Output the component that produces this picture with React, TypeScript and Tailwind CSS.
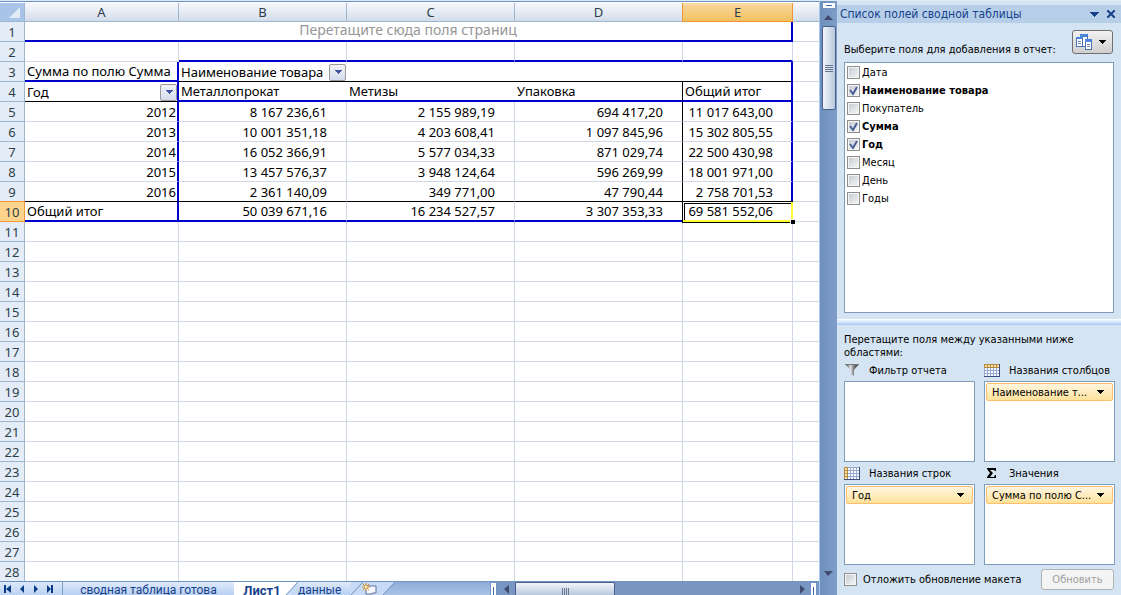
import type { ReactNode } from "react";

const columns = ["A", "B", "C", "D", "E"];
const years = [
  { row: 5, year: 2012, values: ["8 167 236,61", "2 155 989,19", "694 417,20"], total: "11 017 643,00" },
  { row: 6, year: 2013, values: ["10 001 351,18", "4 203 608,41", "1 097 845,96"], total: "15 302 805,55" },
  { row: 7, year: 2014, values: ["16 052 366,91", "5 577 034,33", "871 029,74"], total: "22 500 430,98" },
  { row: 8, year: 2015, values: ["13 457 576,37", "3 948 124,64", "596 269,99"], total: "18 001 971,00" },
  { row: 9, year: 2016, values: ["2 361 140,09", "349 771,00", "47 790,44"], total: "2 758 701,53" },
];
const emptyRows = [...Array(18).keys()].map((n) => n + 11);

const fields = [
  { name: "Дата", used: false },
  { name: "Наименование товара", used: true },
  { name: "Покупатель", used: false },
  { name: "Сумма", used: true },
  { name: "Год", used: true },
  { name: "Месяц", used: false },
  { name: "День", used: false },
  { name: "Годы", used: false },
];

const Arrow = ({ className = "h-1 w-2" }: { className?: string }) => (
  <svg viewBox="0 0 8 4" className={`shrink-0 ${className}`} shapeRendering="crispEdges">
    <path d="M0 0h8L4 4z" fill="currentColor" />
  </svg>
);

const RowHead = ({ n, active = false }: { n: number; active?: boolean }) => (
  <th
    scope="row"
    className={`border-r border-b p-0 pt-px text-center font-normal text-[#2b3f4a] ${
      active
        ? "border-[#f29436] bg-[#ffd58d] shadow-[0_-1px_0_#f29436]"
        : "border-[#9eb6ce] bg-[#e4ecf7]"
    }`}>
    {n}
  </th>
);

const FilterButton = ({ label }: { label: string }) => (
  <button
    aria-label={label}
    className="flex h-[17px] w-[17px] shrink-0 items-center justify-center rounded-xs border border-[#9a9a9a] bg-linear-to-b from-[#f4f4f4] to-[#d3dcee] text-[#3f55a5]">
    <Arrow />
  </button>
);

const Sheet = () => (
  <table className="w-full table-fixed border-separate border-spacing-0 text-[13px] leading-[17px]">
    <colgroup>
      <col className="w-[25px]" />
      <col className="w-[154px]" />
      <col className="w-[168px]" />
      <col className="w-[168px]" />
      <col className="w-[168px]" />
      <col className="w-[110px]" />
      <col />
    </colgroup>
    <thead>
      <tr className="h-[19px]">
        <th className="border-r border-b border-[#9eb6ce] bg-[#a9c4e9] p-0">
          <svg viewBox="0 0 24 18" className="block h-[18px] w-6">
            <path d="M20 4v11H9z" fill="#e2ebf7" />
          </svg>
        </th>
        {columns.map((c) => (
          <th
            key={c}
            scope="col"
            className={`border-r border-b p-0 text-center font-normal text-[#2b3f4a] ${
              c === "E"
                ? "border-[#f29436] bg-linear-to-b from-[#f9d99f] to-[#f1c15f] shadow-[-1px_0_0_#f29436]"
                : "border-[#9eb6ce] bg-linear-to-b from-[#f6f9fc] to-[#d3dcea]"
            }`}>
            {c}
          </th>
        ))}
        <th className="border-b border-[#9eb6ce] bg-linear-to-b from-[#f6f9fc] to-[#d3dcea] p-0" />
      </tr>
    </thead>
    <tbody>
      <tr className="h-5">
        <RowHead n={1} />
        <td
          colSpan={5}
          className="border-r-2 border-b-2 border-[#0000cc] p-0 pb-0.5 text-center text-sm leading-4 text-[#969696]">
          Перетащите сюда поля страниц
        </td>
        <td className="border-b border-[#d0d7e5]" />
      </tr>
      <tr className="h-5">
        <RowHead n={2} />
        <td className="border-r border-b border-[#d0d7e5]" />
        {["B", "C", "D", "E"].map((c) => (
          <td key={c} className="border-r border-b-2 border-r-[#d0d7e5] border-b-[#0000cc]" />
        ))}
        <td className="border-b border-[#d0d7e5]" />
      </tr>
      <tr className="h-5">
        <RowHead n={3} />
        <td className="border-r-2 border-b-2 border-[#0000cc] p-0 pt-px pl-0.5 whitespace-nowrap">
          Сумма по полю Сумма
        </td>
        <td colSpan={4} className="border-r-2 border-b border-r-[#0000cc] border-b-black p-0 pt-px pl-0.5">
          <div className="flex items-center gap-1.5">
            <span>Наименование товара</span>
            <FilterButton label="Фильтр: Наименование товара" />
          </div>
        </td>
        <td className="border-b border-[#d0d7e5]" />
      </tr>
      <tr className="h-5">
        <RowHead n={4} />
        <td className="border-r-2 border-b border-r-[#0000cc] border-b-black p-0 pt-px pl-0.5">
          <div className="flex items-center justify-between">
            <span>Год</span>
            <FilterButton label="Фильтр: Год" />
          </div>
        </td>
        <td className="border-b-2 border-[#0000cc] p-0 pt-px pl-0.5">Металлопрокат</td>
        <td className="border-b-2 border-[#0000cc] p-0 pt-px pl-0.5">Метизы</td>
        <td className="border-r border-b-2 border-r-black border-b-[#0000cc] p-0 pt-px pl-0.5">Упаковка</td>
        <td className="border-r-2 border-b-2 border-[#0000cc] p-0 pt-px pl-0.5">Общий итог</td>
        <td className="border-b border-[#d0d7e5]" />
      </tr>
      {years.map(({ row, year, values, total }) => {
        const line = row === 9 ? "border-b-black" : "border-b-[#d0d7e5]";
        return (
          <tr key={row} className="h-5">
            <RowHead n={row} />
            <td className={`border-r-2 border-b border-r-[#0000cc] p-0 pt-px pr-px text-right ${line}`}>
              {year}
            </td>
            {values.map((v, i) => (
              <td
                key={v}
                className={`border-r border-b p-0 pt-px pr-[19px] text-right ${line} ${
                  i === 2 ? "border-r-black" : "border-r-[#d0d7e5]"
                }`}>
                {v}
              </td>
            ))}
            <td className={`border-r-2 border-b border-r-[#0000cc] p-0 pt-px pr-[18px] text-right ${line}`}>
              {total}
            </td>
            <td className="border-b border-[#d0d7e5]" />
          </tr>
        );
      })}
      <tr className="h-5">
        <RowHead n={10} active />
        <td className="border-r-2 border-b-2 border-[#0000cc] p-0 pt-px pl-0.5">Общий итог</td>
        {["50 039 671,16", "16 234 527,57", "3 307 353,33"].map((v) => (
          <td
            key={v}
            className="border-r border-b-2 border-r-[#d0d7e5] border-b-[#0000cc] p-0 pt-px pr-[19px] text-right">
            {v}
          </td>
        ))}
        <td className="relative border-r-2 border-b-2 border-[#ffff33] p-0 pt-px pr-[18px] text-right">
          69 581 552,06
          {/* selection frame and fill handle */}
          <span className="absolute -top-px -right-0.5 -bottom-0.5 -left-px border-t border-l border-black" />
          <span className="absolute top-px right-0 bottom-0 left-px border-t border-l border-black" />
          <span className="absolute -right-0.5 -bottom-[3px] -left-px h-px bg-black" />
          <span className="absolute -right-1 -bottom-1 h-[5px] w-[5px] border-t border-l border-white bg-black" />
        </td>
        <td className="border-b border-[#d0d7e5]" />
      </tr>
      {emptyRows.map((n) => (
        <tr key={n} className="h-5">
          <RowHead n={n} />
          {columns.map((c) => (
            <td key={c} className="border-r border-b border-[#d0d7e5]" />
          ))}
          <td className="border-b border-[#d0d7e5]" />
        </tr>
      ))}
    </tbody>
  </table>
);

const navIcons = [
  { label: "Первый лист", d: "M0 0h2v8H0zM7 0v8L2 4z" },
  { label: "Предыдущий лист", d: "M6 0v8L2 4z" },
  { label: "Следующий лист", d: "M2 0v8l4-4z" },
  { label: "Последний лист", d: "M1 0v8l4-4zM5 0h2v8H5z" },
];

const SheetTabs = () => (
  <div className="flex h-3.5 shrink-0 items-start overflow-hidden border-t border-[#6f93c3] bg-linear-to-b from-[#8fadd8] to-[#a9c3e8]">
    <div className="flex h-full min-w-0 flex-1 items-start overflow-hidden font-['Roboto',sans-serif] text-xs leading-[17px] text-[#15428b]">
      <div className="flex h-full w-[62px] shrink-0 items-center gap-1.5 bg-linear-to-b from-[#dbe8fa] to-[#bdd3f2] pl-1">
        {navIcons.map(({ label, d }) => (
          <button key={label} aria-label={label}>
            <svg viewBox="0 0 8 8" className="h-2 w-2">
              <path d={d} fill="#0c3a86" />
            </svg>
          </button>
        ))}
      </div>
      <button className="h-full w-[172px] shrink-0 border-l border-[#7f9fcb] bg-linear-to-b from-[#dfeafa] to-[#b9d0f2]">
        сводная таблица готова
      </button>
      <button className="h-full w-[52px] shrink-0 bg-white pl-1 text-[13px] font-bold">Лист1</button>
      <svg viewBox="0 0 12 13" className="h-[13px] w-3 shrink-0 bg-[#c8dbf6]">
        <path d="M0 0h12L0 13z" fill="#fff" />
        <path d="M12 0L0 13" stroke="#6f8fbd" />
      </svg>
      <button className="h-full w-[53px] shrink-0 bg-linear-to-b from-[#dfeafa] to-[#b9d0f2] pr-2.5 text-center">
        данные
      </button>
      <button aria-label="Вставить лист" className="shrink-0">
        <svg viewBox="0 0 44 13" className="h-[13px] w-11">
          <path d="M0 0h44L32 13H0z" fill="#c8dbf6" />
          <path d="M12 0L0 13M44 0L32 13" stroke="#6f8fbd" />
          <path d="M17 4h8v7h-3l-2 1h-5V8" fill="#f4f7fc" stroke="#5e6f9c" />
          <path d="M15 1v8M11 5h8M12 2l6 6M18 2l-6 6" stroke="#d98a1c" />
          <path d="M14 4h2v2h-2z" fill="#fff3b0" />
        </svg>
      </button>
    </div>
    <div className="flex h-full w-[329px] shrink-0 items-start bg-[#7896c1] pr-0.5">
      <span className="flex h-full w-[7px] shrink-0 border border-b-0 border-[#6f93c3] bg-white pt-1 pl-0.5">
        <span className="h-full w-px bg-[#3d6aa8]" />
      </span>
      <button aria-label="Прокрутить влево" className="flex h-full w-[18px] shrink-0 items-center justify-center pt-0.5">
        <svg viewBox="0 0 5 9" className="h-[9px] w-[5px]">
          <path d="M5 0v9L0 4z" fill="#3f4a6e" />
        </svg>
      </button>
      <div className="flex h-full w-[100px] items-center justify-center gap-px rounded-t-xs border border-b-0 border-[#4a6088] bg-linear-to-b from-[#f2f5fa] to-[#b9c8dd] pt-1">
        {[1, 2, 3, 4].map((n) => (
          <span key={n} className="h-[7px] w-px bg-[#6a7690]" />
        ))}
      </div>
      <div className="flex-1" />
      <button aria-label="Прокрутить вправо" className="flex h-full w-4 shrink-0 items-center justify-center pt-0.5">
        <svg viewBox="0 0 5 9" className="h-[9px] w-[5px]">
          <path d="M0 0v9l5-5z" fill="#3f4a6e" />
        </svg>
      </button>
      <span className="flex h-full w-[7px] shrink-0 border border-b-0 border-[#6f93c3] bg-white pt-1 pl-0.5">
        <span className="h-full w-px bg-[#3d6aa8]" />
      </span>
    </div>
  </div>
);

const VerticalScroll = () => (
  <div className="flex w-[18px] shrink-0 flex-col items-center border-l border-[#a9c8ee] bg-linear-to-r from-[#6e90be] to-[#7f9dc8] pt-px">
    <span className="flex h-[7px] w-3.5 shrink-0 items-center justify-center border border-[#6f93c3] bg-white">
      <span className="h-px w-1.5 bg-[#3d6aa8]" />
    </span>
    <button aria-label="Прокрутить вверх" className="flex h-[17px] w-full shrink-0 items-center justify-center">
      <svg viewBox="0 0 9 5" className="h-[5px] w-[9px]">
        <path d="M0 5h9L4 0z" fill="#3f4a6e" />
      </svg>
    </button>
    <div className="flex h-[84px] w-3.5 shrink-0 flex-col items-center justify-center gap-px rounded-xs border border-[#4a6088] bg-linear-to-r from-[#f2f5fa] to-[#b9c8dd]">
      {[1, 2, 3, 4].map((n) => (
        <span key={n} className="h-px w-2 bg-[#6a7690]" />
      ))}
    </div>
    <div className="flex-1" />
    <button aria-label="Прокрутить вниз" className="mb-3.5 flex h-4 w-full shrink-0 items-center justify-center">
      <svg viewBox="0 0 9 5" className="h-[5px] w-[9px]">
        <path d="M0 0h9L4 5z" fill="#3f4a6e" />
      </svg>
    </button>
  </div>
);

const CheckBox = ({ label, checked = false, className = "" }: { label: string; checked?: boolean; className?: string }) => (
  <label className={`flex items-center ${className}`}>
    <span className="relative h-[13px] w-[13px] shrink-0">
      <input
        type="checkbox"
        defaultChecked={checked}
        className="peer block h-[13px] w-[13px] appearance-none border border-[#8e8f8f] bg-linear-to-br from-[#c3c9d0] to-[#f8f8f8] shadow-[inset_0_0_0_1px_#f4f4f4]"
      />
      <svg viewBox="0 0 13 13" className="pointer-events-none absolute inset-0 hidden h-[13px] w-[13px] peer-checked:block">
        <path d="M3 6l3 4 4-7" fill="none" stroke="#4a5f97" strokeWidth="2" />
      </svg>
    </span>
    <span>{label}</span>
  </label>
);

const FunnelIcon = () => (
  <svg viewBox="0 0 16 14" className="h-3.5 w-4">
    <defs>
      <linearGradient id="funnel">
        <stop offset="0" stopColor="#222" />
        <stop offset=".4" stopColor="#e4e4e4" />
        <stop offset=".6" stopColor="#888" />
        <stop offset="1" stopColor="#222" />
      </linearGradient>
    </defs>
    <path d="M1 1h14l-5 6v6l-3-2V7z" fill="url(#funnel)" />
    <path d="M1 1.500h14" stroke="#777" />
  </svg>
);

const GridIcon = ({ side }: { side: "top" | "left" }) => (
  <svg viewBox="0 0 16 13" className="h-[13px] w-4" shapeRendering="crispEdges">
    <path d="M0 0h16v13H0z" fill="#9aaace" />
    {side === "top" ? <path d="M0 0h16v4H0z" fill="#b08a45" /> : <path d="M0 0h4v13H0z" fill="#b08a45" />}
    {[1, 4, 7, 10].map((y) =>
      [1, 4, 7, 10, 13].map((x) => (
        <path
          key={`${x}-${y}`}
          d={`M${x} ${y}h2v2h-2z`}
          fill={(side === "top" ? y === 1 : x === 1) ? "#ffe6a0" : "#f5f8ff"}
        />
      ))
    )}
    <path d="M15 0h1v13H0v-1h15z" fill="#3c4d80" />
  </svg>
);

const SigmaIcon = () => (
  <svg viewBox="0 0 16 12" className="h-3 w-4">
    <path d="M3 1h9v3h-1l-1-1H6l3 3-3 4h4l1-2h1v3H3v-1l3-4-3-4z" fill="#000" />
  </svg>
);

const Zone = ({ icon, title, field }: { icon: ReactNode; title: string; field?: string }) => (
  <section className="flex min-w-0 flex-col">
    <h3 className="flex h-[22px] items-center gap-[9px] whitespace-nowrap">
      <span className="flex w-4 shrink-0 justify-center">{icon}</span>
      {title}
    </h3>
    <div className="h-[81px] border border-[#7f9db9] bg-white p-px">
      {field && (
        <button className="flex h-[18px] w-full items-center justify-between rounded-xs border border-[#fdbf6f] bg-linear-to-b from-[#fff6e0] to-[#ffe29a] pr-2 pl-[5px]">
          {field}
          <Arrow />
        </button>
      )}
    </div>
  </section>
);

const FieldList = () => (
  <aside className="flex w-[284px] shrink-0 flex-col bg-[#d5e4f3] font-['DejaVu_Sans_Condensed','DejaVu_Sans',sans-serif] text-[11px] leading-[13px] text-black">
    <header className="mt-1 flex h-[18px] shrink-0 items-center bg-[#b7cee9] pr-1.5 pl-[3px] text-xs text-[#15428b]">
      <h2 className="flex-1">Список полей сводной таблицы</h2>
      <button aria-label="Параметры области задач">
        <Arrow className="h-[5px] w-2.5" />
      </button>
      <button aria-label="Закрыть" className="ml-2">
        <svg viewBox="0 0 8 8" className="h-2 w-2">
          <path d="M0 0l8 8M8 0L0 8" stroke="#15428b" strokeWidth="2" />
        </svg>
      </button>
    </header>
    <div className="flex h-[39px] shrink-0 items-end justify-between pr-2 pb-1.5 pl-[7px]">
      <p>Выберите поля для добавления в отчет:</p>
      <button
        aria-label="Вид списка полей"
        className="mb-0.5 flex h-6 w-[41px] items-center justify-between rounded-[3px] border border-[#707070] bg-linear-to-b from-[#f2f2f2] to-[#cfcfcf] pr-1.5 pl-[3px]">
        <svg viewBox="0 0 16 16" className="h-4 w-4" shapeRendering="crispEdges">
          <path d="M4 0h7v12H4z" fill="#fff" stroke="#4b73b8" />
          <path d="M4 0h7v3H4z" fill="#4b86dd" />
          <path d="M0 3h6v9H0z" fill="#fff" stroke="#4b73b8" />
          <path d="M0 3h7v2H0z" fill="#4b86dd" />
          <path d="M9 5h6v10H9z" fill="#fff" stroke="#4b73b8" />
          <path d="M9 5h6v3H9z" fill="#4b86dd" />
          <path d="M2 7h3M2 9h3M11 10h3M11 12h3" stroke="#6f86b4" />
        </svg>
        <Arrow />
      </button>
    </div>
    <ul className="mx-[7px] h-[251px] shrink-0 border border-[#7f9db9] bg-white pl-0.5">
      {fields.map(({ name, used }) => (
        <li key={name} className={used ? "font-bold" : ""}>
          <CheckBox label={name} checked={used} className="h-[18px] gap-0.5" />
        </li>
      ))}
    </ul>
    <div className="mt-1.5 h-1.5 shrink-0 bg-linear-to-b from-white to-[#a9cbf7]" />
    <p className="mt-2 pr-10 pl-[7px]">Перетащите поля между указанными ниже областями:</p>
    <div className="grid grid-cols-2 gap-x-[9px] pr-1.5 pl-[7px]">
      <Zone icon={<FunnelIcon />} title="Фильтр отчета" />
      <Zone icon={<GridIcon side="top" />} title="Названия столбцов" field="Наименование т..." />
      <Zone icon={<GridIcon side="left" />} title="Названия строк" field="Год" />
      <Zone icon={<SigmaIcon />} title="Значения" field="Сумма по полю С..." />
    </div>
    <div className="mt-1 flex items-center justify-between px-[7px]">
      <CheckBox label="Отложить обновление макета" className="gap-1.5" />
      <button
        disabled
        className="h-[21px] w-[73px] rounded-[3px] border border-[#adb2b5] bg-[#f4f4f4] text-[#a0a0a0]">
        Обновить
      </button>
    </div>
  </aside>
);

const App = () => {
  return (
    <div className="flex h-screen overflow-hidden border-t border-[#dce9f8] bg-[#7f9dc8] font-['Noto_Sans',sans-serif] text-black">
      <main className="flex min-w-0 flex-1 flex-col border-t border-[#6f93c3] bg-white">
        <div className="min-h-0 flex-1 overflow-hidden pt-px">
          <Sheet />
        </div>
        <SheetTabs />
      </main>
      <VerticalScroll />
      <FieldList />
    </div>
  );
};

export default App;
